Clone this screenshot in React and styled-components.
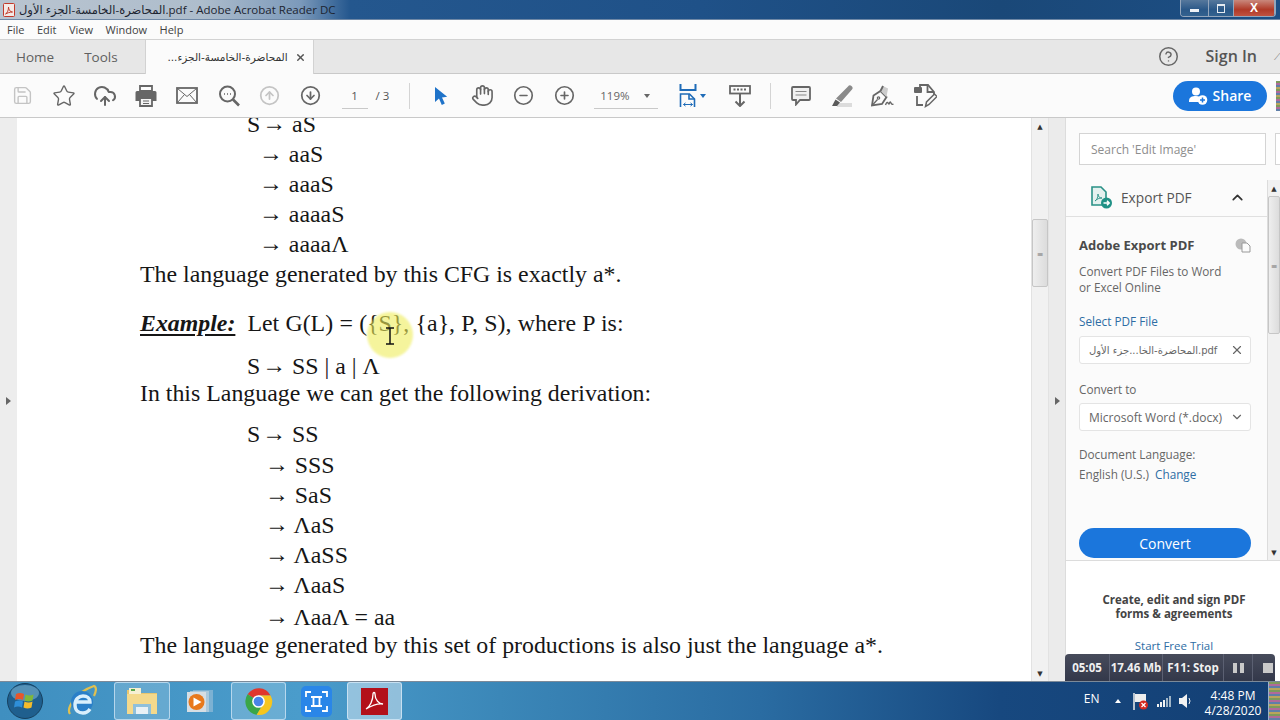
import styled, { createGlobalStyle } from 'styled-components'
import {
  ChevronDown,
  ChevronUp,
  CircleArrowDown,
  CircleArrowUp,
  CircleHelp,
  CircleMinus,
  CirclePlus,
  CloudUpload,
  Hand,
  Save,
  Star,
  X,
} from 'lucide-react'

const GlobalStyle = createGlobalStyle`
  html, body {
    margin: 0;
    padding: 0;
    background: #fff;
  }
  * {
    box-sizing: border-box;
  }
`

const uiFont = '"Open Sans", "DejaVu Sans", sans-serif'
const arabicFont = '"DejaVu Sans", sans-serif'
const glitchStrip = 'repeating-linear-gradient(180deg, #7d9a5c 0 2px, #b06a9a 2px 4px, #5f7fa8 4px 6px, #b9a45c 6px 8px)'

const Screen = styled.div`
  display: flex;
  flex-direction: column;
  font-family: ${uiFont};
  height: 720px;
  overflow: hidden;
  width: 1280px;
`

const TitleBar = styled.div`
  align-items: flex-start;
  background: linear-gradient(90deg, #b9c4d0 0, #aebdcc 200px, #7c9abb 300px, #24578e 350px, #1f5188 700px, #1a4878 1000px, #1d4f85 100%);
  border-bottom: 1px solid #6f88a6;
  display: flex;
  flex: 0 0 20px;
  justify-content: space-between;
`

const TitleText = styled.div`
  align-items: center;
  color: #1c2430;
  display: flex;
  font-size: 11.5px;
  gap: 4px;
  height: 19px;
  padding-left: 3px;
  white-space: nowrap;
`

const WindowButtons = styled.div`
  border: 1px solid #93a6bc;
  border-radius: 0 0 4px 4px;
  border-top: 0;
  display: flex;
  height: 17px;
  margin-right: 4px;
  overflow: hidden;
`

const WindowButton = styled.div`
  align-items: center;
  background: ${({ $close }) => ($close ? 'linear-gradient(#c9887c, #b03a28 60%, #c05240)' : 'linear-gradient(#56789c, #2a5888 60%, #33628f)')};
  border-right: 1px solid #93a6bc;
  color: #fff;
  display: flex;
  font-family: "Liberation Sans", sans-serif;
  font-size: 12px;
  font-weight: 700;
  justify-content: center;
  width: ${({ $w }) => $w}px;
`

const MinimizeGlyph = styled.span`
  background: #eef2f6;
  height: 3px;
  margin-top: 5px;
  width: 9px;
`

const RestoreGlyph = styled.span`
  border: 1px solid #e4eaf0;
  border-top-width: 2px;
  height: 9px;
  width: 8px;
`

const MenuBar = styled.div`
  align-items: center;
  background: #fbfbfb;
  border-bottom: 1px solid #d2d2d2;
  color: #3f3f3f;
  display: flex;
  flex: 0 0 20px;
  font-size: 11px;
  gap: 12.5px;
  padding-left: 7px;
`

const TabRow = styled.div`
  align-items: stretch;
  background: #e7e7e7;
  border-bottom: 1px solid #c9c9c9;
  display: flex;
  flex: 0 0 34px;
  padding-left: 16px;
`

const NavTab = styled.div`
  align-items: center;
  color: #606060;
  display: flex;
  font-size: 13.5px;
  margin-right: 30px;
`

const DocTab = styled.div`
  align-items: center;
  background: #fbfbfb;
  border-left: 1px solid #d2d2d2;
  border-right: 1px solid #d2d2d2;
  color: #333;
  display: flex;
  font-family: ${arabicFont};
  font-size: 10.5px;
  gap: 7px;
  justify-content: flex-end;
  margin-bottom: -1px;
  margin-left: -3px;
  padding-right: 7px;
  width: 169px;
`

const TabSpacer = styled.div`
  flex: 1;
`

const SignIn = styled.div`
  align-items: center;
  color: #555;
  display: flex;
  font-size: 16px;
  font-weight: 600;
  margin-left: 27px;
  margin-right: 17px;
  padding-bottom: 1px;
`

const HelpButton = styled.div`
  align-items: center;
  color: #666;
  display: flex;
`

const EdgeMark = styled.div`
  align-items: center;
  color: #777;
  display: flex;
  font-size: 9px;
  width: 6px;
`

const Toolbar = styled.div`
  align-items: center;
  background: #fbfbfb;
  border-bottom: 1px solid #c9c9c9;
  display: flex;
  flex: 0 0 44px;
  padding-left: 2px;
`

const ToolSlot = styled.div`
  align-items: center;
  color: ${({ $color }) => $color || '#666'};
  display: flex;
  flex: 0 0 41.2px;
  justify-content: center;
`

const PageBox = styled.div`
  border-bottom: 1px solid #c9c9c9;
  color: #555;
  font-size: 11.5px;
  margin-left: 10px;
  padding: 6px 0 5px;
  text-align: center;
  width: 26px;
`

const PageCount = styled.div`
  color: #555;
  font-size: 11.5px;
  margin-left: 8px;
  width: 33px;
`

const ToolDivider = styled.div`
  background: #d4d4d4;
  height: 26px;
  margin: 0 ${({ $right }) => $right}px 0 ${({ $left }) => $left}px;
  width: 1px;
`

const ZoomBox = styled.div`
  align-items: center;
  border-bottom: 1px solid #c9c9c9;
  color: #666;
  display: flex;
  font-size: 11.5px;
  justify-content: space-between;
  margin: 0 13px 0 9px;
  padding: 6px 8px 5px 6px;
  width: 64px;
`

const Caret = styled.span`
  border-left: 3.5px solid transparent;
  border-right: 3.5px solid transparent;
  border-top: 4px solid ${({ $color }) => $color || '#666'};
  height: 0;
  width: 0;
`

const FitSlot = styled.div`
  align-items: center;
  display: flex;
  flex: 0 0 41px;
  gap: 3px;
  justify-content: center;
  margin-right: 7px;
  padding-left: 2px;
`

const ShareButton = styled.div`
  align-items: center;
  background: #1b76dc;
  border-radius: 15px;
  color: #fff;
  display: flex;
  font-size: 14px;
  font-weight: 600;
  gap: 5px;
  height: 30px;
  justify-content: center;
  margin-left: auto;
  margin-right: 9px;
  width: 94px;
`

const ToolbarEdge = styled.div`
  background: ${glitchStrip};
  height: 30px;
  width: 4px;
`

const Workspace = styled.div`
  display: flex;
  flex: 1;
  min-height: 0;
  position: relative;
`

const LeftGutter = styled.div`
  align-items: center;
  background: #ededed;
  display: flex;
  flex: 0 0 17px;
  justify-content: center;
  padding-right: 1px;
  padding-top: 2px;
`

const SideArrow = styled.span`
  border-bottom: 4px solid transparent;
  border-left: 5px solid #666;
  border-top: 4px solid transparent;
  height: 0;
  width: 0;
`

const DocPage = styled.div`
  background: #fff;
  flex: 0 0 1014px;
  overflow: hidden;
  position: relative;
`

const DocText = styled.div`
  color: #161616;
  font-family: "Liberation Serif", "Times New Roman", serif;
  font-size: 23.85px;
  margin-top: -9px;
  padding-left: 123px;
`

const Line = styled.div`
  height: 30px;
  line-height: 30px;
  margin-top: ${({ $gap }) => $gap || 0}px;
  padding-left: ${({ $x }) => $x || 0}px;
  white-space: pre;
  word-spacing: ${({ $spacing }) => $spacing || 0}px;
`

const Arrow = styled.span`
  display: inline-block;
  margin-left: ${({ $lead }) => ($lead ? 2 : -4)}px;
  transform: translateY(-1.5px);
`

const ExampleLabel = styled.span`
  font-weight: 700;
  font-style: italic;
  margin-right: 12px;
  text-decoration: underline;
  text-decoration-thickness: 2px;
  text-underline-offset: 3px;
`

const CursorGlow = styled.div`
  background: rgba(238, 236, 90, 0.6);
  border-radius: 50%;
  filter: blur(1px);
  height: 46px;
  left: 350px;
  position: absolute;
  top: 194px;
  width: 46px;
`

const CursorMark = styled.svg`
  left: 368px;
  position: absolute;
  top: 209px;
`

const DocScroll = styled.div`
  background: #f1f1f1;
  border-left: 1px solid #e2e2e2;
  border-right: 1px solid #e2e2e2;
  display: flex;
  flex: 0 0 18px;
  flex-direction: column;
  align-items: stretch;
`

const ScrollEnd = styled.div`
  align-items: center;
  color: #333;
  display: flex;
  flex: 0 0 16px;
  font-size: 7px;
  justify-content: center;
`

const ScrollThumb = styled.div`
  align-items: center;
  background: linear-gradient(90deg, #eee, #dcdcdc);
  border: 1px solid #c6c6c6;
  border-radius: 2px;
  color: #777;
  display: flex;
  flex: 0 0 ${({ $h }) => $h}px;
  font-size: 8px;
  justify-content: center;
  margin-top: ${({ $top }) => $top}px;
`

const ScrollFill = styled.div`
  flex: 1;
`

const PanelGutter = styled.div`
  align-items: center;
  background: #ebebeb;
  display: flex;
  flex: 0 0 16px;
  justify-content: center;
  padding-top: 2px;
`

const RightPanel = styled.div`
  background: #fbfbfb;
  border-left: 1px solid #dcdcdc;
  display: flex;
  flex: 1;
  flex-direction: column;
  min-width: 0;
`

const SearchRow = styled.div`
  display: flex;
  flex: 0 0 62px;
  gap: 9px;
  padding: 15px 0 0 13px;
`

const SearchBox = styled.div`
  align-items: center;
  background: #fff;
  border: 1px solid #d4d4d4;
  color: #8d8d8d;
  display: flex;
  font-size: 12px;
  height: 32px;
  padding-left: 11px;
  width: 187px;
`

const SearchStub = styled.div`
  background: #fff;
  border-bottom: 1px solid #d4d4d4;
  border-left: 1px solid #d4d4d4;
  border-top: 1px solid #d4d4d4;
  flex: 1;
  height: 32px;
`

const PanelBody = styled.div`
  display: flex;
  flex: 0 0 380px;
`

const PanelColumn = styled.div`
  display: flex;
  flex: 0 0 201px;
  flex-direction: column;
`

const ExportHeader = styled.div`
  align-items: center;
  border-bottom: 1px solid #e0e0e0;
  color: #555;
  display: flex;
  flex: 0 0 37px;
  font-size: 13.7px;
  gap: 8px;
  padding-left: 24px;
  padding-bottom: 2px;
`

const ExportChevron = styled(ChevronUp)`
  color: #333;
  margin-left: 29px;
`

const ExportForm = styled.div`
  display: flex;
  flex: 1;
  flex-direction: column;
  padding: 19px 0 0 13px;
`

const FormTitle = styled.div`
  align-items: center;
  color: #4a4a4a;
  display: flex;
  font-size: 13px;
  font-weight: 700;
  height: 18px;
  justify-content: space-between;
  padding-right: 15px;
  width: 187px;
`

const FormText = styled.div`
  color: #666;
  font-size: 11.75px;
  line-height: ${({ $lh }) => $lh || 16}px;
  margin-top: ${({ $top }) => $top || 0}px;
`

const FormLink = styled.span`
  color: #2e6da4;
  font-size: 11.75px;
  margin-left: ${({ $left }) => $left || 0}px;
`

const FieldBox = styled.div`
  align-items: center;
  background: #fff;
  border: 1px solid #e4e4e4;
  border-radius: 3px;
  color: #666;
  display: flex;
  font-size: ${({ $small }) => ($small ? 10 : 12)}px;
  height: ${({ $h }) => $h}px;
  justify-content: space-between;
  margin-top: ${({ $top }) => $top}px;
  padding: 0 6px 0 9px;
  width: 172px;
`

const ArabicName = styled.span`
  font-family: ${arabicFont};
  white-space: nowrap;
`

const ConvertButton = styled.div`
  align-items: center;
  background: #1b76dc;
  border-radius: 15px;
  color: #fff;
  display: flex;
  font-size: 14px;
  height: 30px;
  justify-content: center;
  margin-top: 44px;
  width: 172px;
`

const PanelScroll = styled.div`
  background: #f1f1f1;
  border-left: 1px solid #dcdcdc;
  display: flex;
  flex: 1;
  flex-direction: column;
`

const PromoBlock = styled.div`
  border-top: 1px solid #dcdcdc;
  background: #fff;
  display: flex;
  flex: 1;
  flex-direction: column;
  align-items: center;
  padding-top: 32px;
  padding-right: 0;
  width: 216px;
`

const PromoText = styled.div`
  color: #444;
  font-size: 11.5px;
  font-weight: 700;
  line-height: 14px;
  text-align: center;
`

const PromoLink = styled.div`
  color: #2e6da4;
  font-size: 11.5px;
  margin-top: 17px;
`

const RecorderBar = styled.div`
  align-items: stretch;
  background: linear-gradient(#474b5b, #33384a);
  border-radius: 4px 4px 0 0;
  bottom: 0;
  color: #f0f0f0;
  display: flex;
  font-size: 11.5px;
  font-weight: 700;
  height: 27px;
  left: 1065px;
  position: absolute;
  width: 210px;
`

const RecorderCell = styled.div`
  align-items: center;
  border-right: 1px solid #5b6072;
  display: flex;
  gap: 3px;
  justify-content: center;
  width: ${({ $w }) => $w}px;
`

const StopCell = styled.div`
  align-items: center;
  display: flex;
  flex: 1;
  justify-content: flex-end;
  padding-right: 2px;
`

const PauseBar = styled.span`
  background: #c9c9c9;
  height: 10px;
  width: 4px;
`

const StopSquare = styled.span`
  background: #c9c9c9;
  height: 10px;
  width: 10px;
`

const Taskbar = styled.div`
  align-items: stretch;
  background: linear-gradient(90deg, #3f8fc0 0, #4a9ccb 300px, #3b87b8 500px, #2a6ca2 760px, #17487f 1000px, #133f74 100%);
  border-top: 1px solid #7c8a99;
  display: flex;
  flex: 0 0 38px;
`

const TaskSlot = styled.div`
  align-items: center;
  background: ${({ $open, $active }) => ($active ? 'rgba(255,255,255,0.42)' : $open ? 'rgba(255,255,255,0.18)' : 'transparent')};
  border: 1px solid ${({ $open, $active }) => ($open || $active ? 'rgba(235,245,255,0.6)' : 'transparent')};
  border-radius: 3px;
  display: flex;
  justify-content: center;
  margin-right: ${({ $gap }) => $gap || 0}px;
  width: ${({ $w }) => $w}px;
`

const TraySection = styled.div`
  align-items: center;
  color: #fff;
  display: flex;
  margin-left: auto;
`

const TrayLabel = styled.div`
  font-size: 12px;
  margin-right: 15px;
  padding-bottom: 5px;
`

const TrayIcons = styled.div`
  align-items: center;
  display: flex;
  gap: 8.5px;
`

const TrayArrow = styled.span`
  border-bottom: 4px solid #fff;
  border-left: 3.5px solid transparent;
  border-right: 3.5px solid transparent;
  height: 0;
  margin-right: 4px;
  width: 0;
`

const Clock = styled.div`
  font-size: 12px;
  line-height: 15px;
  margin-left: 9px;
  padding-top: 3px;
  text-align: center;
  width: 62px;
`

const ShowDesktop = styled.div`
  background: ${glitchStrip};
  border-left: 1px solid #9cb2c8;
  height: 100%;
  margin-left: 4px;
  width: 12px;
`

function PrinterIcon() {
  return (
    <svg width="22" height="22" viewBox="0 0 22 22">
      <path d="M5 1h12v5H5z" fill="none" stroke="#666" strokeWidth="1.800" />
      <path d="M2 6h18a1.500 1.500 0 0 1 1.500 1.500V16H17v-3H5v3H.500V7.500A1.500 1.500 0 0 1 2 6z" fill="#666" />
      <path d="M5 13h12v8H5z" fill="#f4f4f4" stroke="#666" strokeWidth="1.800" />
      <path d="M8 16h6M8 18.500h6" stroke="#666" strokeWidth="1" />
    </svg>
  )
}

function MailIcon() {
  return (
    <svg width="22" height="17" viewBox="0 0 22 17" fill="none" stroke="#666">
      <rect x="1" y="1" width="20" height="15" strokeWidth="1.800" />
      <path d="M1.500 1.500L11 9.500l9.500-8M1.500 15.500l7-8M20.500 15.500l-7-8" strokeWidth="1" />
    </svg>
  )
}

function SearchDotsIcon() {
  return (
    <svg width="22" height="22" viewBox="0 0 22 22" fill="none" stroke="#666" strokeWidth="2">
      <circle cx="9.500" cy="9" r="7.500" />
      <path d="M15 14.500l6 6" strokeWidth="2.600" />
      <path d="M6 9h1M9 9h1M12 9h1" strokeWidth="1.600" />
    </svg>
  )
}

function PointerIcon() {
  return (
    <svg width="14" height="20" viewBox="0 0 14 20">
      <path d="M1 1v15l4-3.500 2.800 6.500 3-1.400L8 11.500l5.200-.7z" fill="#1f73c9" />
    </svg>
  )
}

function FitWidthIcon() {
  return (
    <svg width="18" height="24" viewBox="0 0 18 24" fill="none" stroke="#1f6cb8" strokeWidth="1.600">
      <path d="M1.500 0v6h15V0" strokeWidth="2" />
      <path d="M1.500 23V10h9l5 5v8" />
      <path d="M10 10v5h5.500" />
      <path d="M4.500 20.500h9M4.500 20.500l2-1.600M4.500 20.500l2 1.600M13.500 20.500l-2-1.600M13.500 20.500l-2 1.600" strokeWidth="1" />
    </svg>
  )
}

function KeyboardDropIcon() {
  return (
    <svg width="22" height="22" viewBox="0 0 22 22" fill="none" stroke="#666">
      <rect x="1" y="1" width="20" height="7.500" strokeWidth="1.800" />
      <path d="M4.500 4.500h13" strokeWidth="2" strokeDasharray="2 1.500" />
      <path d="M11 9v11.500M6.500 16.500l4.500 4.500 4.500-4.500" strokeWidth="2" />
    </svg>
  )
}

function CommentIcon() {
  return (
    <svg width="20" height="20" viewBox="0 0 20 20" fill="none" stroke="#666">
      <path d="M2 1h16a1 1 0 0 1 1 1v11a1 1 0 0 1-1 1H9l-4 4.500V14H2a1 1 0 0 1-1-1V2a1 1 0 0 1 1-1z" fill="#f0f0f0" strokeWidth="1.800" />
      <path d="M4.500 5.500h11M4.500 9h11" stroke="#888" strokeWidth="1.200" />
    </svg>
  )
}

function HighlighterIcon() {
  return (
    <svg width="22" height="22" viewBox="0 0 22 22">
      <rect x="6" y="18" width="15" height="4" fill="#dcdcdc" />
      <path d="M17 1.500a2.500 2.500 0 0 1 4 3L10 17l-5-3.500z" fill="#8a8a8a" />
      <path d="M4.500 14.500l4.500 3-3 3.500H1z" fill="#5a5a5a" />
    </svg>
  )
}

function SignPenIcon() {
  return (
    <svg width="24" height="22" viewBox="0 0 24 22" fill="none" stroke="#666" strokeWidth="1.800">
      <path d="M1 20.500l1.500-10L9.500 6l6 6-4.500 7z" />
      <path d="M1 20.500l5.500-6" strokeWidth="1.300" />
      <circle cx="7.500" cy="13" r="1.200" strokeWidth="1.200" />
      <path d="M9.500 6L12 1l5 2.500-1.500 8.500" fill="#ccc" stroke="none" />
      <path d="M9.500 6l2.500-5" />
      <path d="M14.500 20q1.500-4 2.500-2t1.500 0 1.500 0 2.500 1" strokeWidth="1.400" />
    </svg>
  )
}

function EditDocIcon() {
  return (
    <svg width="24" height="24" viewBox="0 0 24 24" fill="none" stroke="#666" strokeWidth="1.800">
      <path d="M7 3V1h8l6 7v3" />
      <rect x="1" y="3" width="8" height="6" fill="#666" stroke="none" rx="1" />
      <path d="M14.500 1v7H21" />
      <path d="M4 12v9h6" />
      <path d="M12.500 22.500l1-4.500 8-8 2.500 2.500-8 8z" strokeWidth="1.500" />
    </svg>
  )
}

function ShareUserIcon() {
  return (
    <svg width="19" height="18" viewBox="0 0 19 18">
      <circle cx="7" cy="4.500" r="4" fill="#fff" />
      <path d="M0 14c0-4 3-5 7-5 3 0 4 1 5 2l-2 4H0z" fill="#fff" />
      <circle cx="13.500" cy="13" r="4.800" fill="#fff" />
      <path d="M13.500 10.500v5M11 13h5" stroke="#1b76dc" strokeWidth="1.500" />
    </svg>
  )
}

function PdfBadgeIcon() {
  return (
    <svg width="12" height="14" viewBox="0 0 12 14">
      <rect x="0.500" y="0.500" width="11" height="13" rx="1" fill="#f4e9e6" stroke="#c23a2b" />
      <path d="M2.500 11c2-1 3-4 3-7 0 3 2 5 4 5-3 0-5 1-7 2z" fill="none" stroke="#c23a2b" strokeWidth="1" />
    </svg>
  )
}

function ExportPdfIcon() {
  return (
    <svg width="23" height="23" viewBox="0 0 23 23" fill="none">
      <path d="M2 1h9l5 5v13H2z" fill="#e4f1ef" stroke="#2a9187" strokeWidth="1.600" />
      <path d="M5 15c2-1 3-4 3-7 0 3 2 4 4 4-3 0-5 1-7 3z" stroke="#2a9187" strokeWidth="0.900" />
      <circle cx="16.500" cy="17" r="5.500" fill="#1f9186" />
      <path d="M13.500 17h5.500M17 14.800l2.200 2.200-2.200 2.200" stroke="#fff" strokeWidth="1.500" />
    </svg>
  )
}

function CloudDocIcon() {
  return (
    <svg width="16" height="15" viewBox="0 0 16 15">
      <circle cx="6" cy="6" r="5.500" fill="#bbb" />
      <path d="M7 5h5l3 3v6H7z" fill="#fbfbfb" stroke="#999" />
    </svg>
  )
}

function StartOrb() {
  return (
    <svg width="36" height="36" viewBox="0 0 36 36">
      <circle cx="18" cy="18" r="17.500" fill="#1f5f8e" stroke="#17405f" />
      <ellipse cx="18" cy="10" rx="14" ry="8" fill="#8cc4e0" opacity="0.500" />
      <path d="M9 11q4-2 8 0l-1 6q-4-2-8 0z" fill="#e8562a" />
      <path d="M18.500 11.500q4 2 8 0l-1 6q-4 2-8 0z" fill="#7fb83a" />
      <path d="M8 18.500q4-2 8 0l-1 6q-4-2-8 0z" fill="#2f8fd8" />
      <path d="M17.500 18.500q4 2 8 0l-1 6q-4 2-8 0z" fill="#f4bb2c" />
    </svg>
  )
}

function IeIcon() {
  return (
    <svg width="32" height="34" viewBox="0 0 32 34" fill="none">
      <path d="M4 30C0 24 10 8 28 2c3 1 2 6 0 10" stroke="#e0c050" strokeWidth="2.200" />
      <circle cx="16" cy="18" r="11" fill="#2a7fc8" />
      <path d="M9 18h15c0-4-3-6-7-6s-8 3-8 9 4 8 8 8c3 0 5-1 7-4" stroke="#d9effc" strokeWidth="3.400" />
    </svg>
  )
}

function FolderIcon() {
  return (
    <svg width="32" height="28" viewBox="0 0 32 28">
      <path d="M1 3h12l2 3h16v21H1z" fill="#e9c66e" />
      <rect x="3" y="1" width="12" height="6" fill="#f6efd2" />
      <rect x="5" y="2" width="4" height="2" fill="#58a848" />
      <rect x="1" y="7" width="30" height="20" fill="#f4d98c" />
      <rect x="7" y="17" width="18" height="10" fill="#8fc0dc" />
      <rect x="10" y="20" width="12" height="7" fill="#e8f1f6" />
    </svg>
  )
}

function MediaIcon() {
  return (
    <svg width="26" height="24" viewBox="0 0 26 24">
      <rect x="6" y="1" width="20" height="22" fill="#9fc2da" opacity="0.600" />
      <rect x="3" y="2" width="19" height="21" fill="#b6cfe0" opacity="0.800" />
      <rect x="0" y="3" width="19" height="20" fill="#d6dee4" />
      <circle cx="9.500" cy="13" r="8" fill="#e8791d" />
      <path d="M6.500 8.500v9l8-4.500z" fill="#fff" />
    </svg>
  )
}

function ChromeIcon() {
  return (
    <svg width="29" height="29" viewBox="0 0 48 48">
      <path d="M24 24L6 12a22 22 0 0 1 38 2H24z" fill="#e0372c" />
      <path d="M24 24l-18-12a22 22 0 0 0 15 34l11-18z" fill="#3aa648" />
      <path d="M24 14h20a22 22 0 0 1-23 32l12-20z" fill="#f7c51d" />
      <circle cx="24" cy="24" r="10.500" fill="#fff" />
      <circle cx="24" cy="24" r="8" fill="#4a84e8" />
    </svg>
  )
}

function CaptureIcon() {
  return (
    <svg width="31" height="31" viewBox="0 0 31 31" fill="none">
      <rect width="31" height="31" rx="5" fill="#2a86e8" />
      <path d="M5 11V6h5M21 6h5v5M5 20v5h5M21 25h5v-5" stroke="#fff" strokeWidth="1.800" />
      <path d="M10 11h11M10 20h11M12.500 11v9M18.500 11v9" stroke="#fff" strokeWidth="1.800" />
    </svg>
  )
}

function AcrobatIcon() {
  return (
    <svg width="27" height="27" viewBox="0 0 27 27" fill="none">
      <rect width="27" height="27" fill="#b3101a" />
      <path d="M5 21c4-2 7-9 7-15 0-2 2-2 2 0 0 6 4 10 8 10-6-1-12 2-17 5z" stroke="#fff" strokeWidth="1.300" />
    </svg>
  )
}

function TrayFlagIcon() {
  return (
    <svg width="15" height="17" viewBox="0 0 15 17">
      <path d="M1 0v17" stroke="#eee" strokeWidth="1.500" />
      <path d="M2 1h11v8H2z" fill="#eee" />
      <circle cx="10.500" cy="12" r="4.500" fill="#d42a20" />
      <path d="M8.500 10l4 4M12.500 10l-4 4" stroke="#fff" strokeWidth="1.200" />
    </svg>
  )
}

function TraySignalIcon() {
  return (
    <svg width="14" height="11" viewBox="0 0 14 11" fill="#f2f2f2">
      <rect x="0" y="8" width="2" height="3" />
      <rect x="3" y="6" width="2" height="5" />
      <rect x="6" y="4" width="2" height="7" />
      <rect x="9" y="2" width="2" height="9" fill="#9fb4c6" />
      <rect x="12" y="0" width="2" height="11" fill="#9fb4c6" />
    </svg>
  )
}

function TraySpeakerIcon() {
  return (
    <svg width="14" height="14" viewBox="0 0 14 14">
      <path d="M0 4h3l5-4v14l-5-4H0z" fill="#f2f2f2" />
      <path d="M10 4q2 3 0 6" stroke="#f2f2f2" fill="none" />
    </svg>
  )
}

const topLines = ['aaS', 'aaaS', 'aaaaS', 'aaaaΛ']
const deriveLines = [
  ['SSS', 1],
  ['SaS', 0],
  ['ΛaS', 0],
  ['ΛaSS', 0],
  ['ΛaaS', 0],
  ['ΛaaΛ = aa', 2],
]

export default function App() {
  return (
    <Screen>
      <GlobalStyle />
      <TitleBar>
        <TitleText>
          <PdfBadgeIcon />
          <span>المحاضرة-الخامسة-الجزء الأول.pdf - Adobe Acrobat Reader DC</span>
        </TitleText>
        <WindowButtons>
          <WindowButton $w={28}>
            <MinimizeGlyph />
          </WindowButton>
          <WindowButton $w={25}>
            <RestoreGlyph />
          </WindowButton>
          <WindowButton $w={41} $close>
            X
          </WindowButton>
        </WindowButtons>
      </TitleBar>

      <MenuBar>
        <span>File</span>
        <span>Edit</span>
        <span>View</span>
        <span>Window</span>
        <span>Help</span>
      </MenuBar>

      <TabRow>
        <NavTab>Home</NavTab>
        <NavTab>Tools</NavTab>
        <DocTab>
          <span dir="rtl">المحاضرة-الخامسة-الجزء...</span>
          <X size={11} strokeWidth={3} color="#555" />
        </DocTab>
        <TabSpacer />
        <HelpButton>
          <CircleHelp size={21} strokeWidth={1.7} />
        </HelpButton>
        <SignIn>Sign In</SignIn>
        <EdgeMark>⟋</EdgeMark>
      </TabRow>

      <Toolbar>
        <ToolSlot $color="#c4c4c4"><Save size={21} strokeWidth={1.6} /></ToolSlot>
        <ToolSlot><Star size={24} strokeWidth={1.4} /></ToolSlot>
        <ToolSlot><CloudUpload size={24} strokeWidth={2} /></ToolSlot>
        <ToolSlot><PrinterIcon /></ToolSlot>
        <ToolSlot><MailIcon /></ToolSlot>
        <ToolSlot><SearchDotsIcon /></ToolSlot>
        <ToolSlot $color="#c4c4c4"><CircleArrowUp size={21} strokeWidth={2} /></ToolSlot>
        <ToolSlot><CircleArrowDown size={21} strokeWidth={2} /></ToolSlot>
        <PageBox>1</PageBox>
        <PageCount>/ 3</PageCount>
        <ToolDivider $left={0} $right={11} />
        <ToolSlot><PointerIcon /></ToolSlot>
        <ToolSlot><Hand size={23} strokeWidth={1.7} /></ToolSlot>
        <ToolSlot><CircleMinus size={21} strokeWidth={1.9} /></ToolSlot>
        <ToolSlot><CirclePlus size={21} strokeWidth={1.9} /></ToolSlot>
        <ZoomBox>
          <span>119%</span>
          <Caret />
        </ZoomBox>
        <FitSlot>
          <FitWidthIcon />
          <Caret $color="#1f6cb8" />
        </FitSlot>
        <ToolSlot><KeyboardDropIcon /></ToolSlot>
        <ToolDivider $left={10} $right={9} />
        <ToolSlot><CommentIcon /></ToolSlot>
        <ToolSlot><HighlighterIcon /></ToolSlot>
        <ToolSlot><SignPenIcon /></ToolSlot>
        <ToolSlot><EditDocIcon /></ToolSlot>
        <ShareButton>
          <ShareUserIcon />
          Share
        </ShareButton>
        <ToolbarEdge />
      </Toolbar>

      <Workspace>
        <LeftGutter>
          <SideArrow />
        </LeftGutter>
        <DocPage>
          <DocText>
            <Line $x={107}>S<Arrow $lead>→</Arrow> aS</Line>
            {topLines.map((text) => (
              <Line key={text} $x={123}><Arrow>→</Arrow> {text}</Line>
            ))}
            <Line>The language generated by this CFG is exactly a*.</Line>
            <Line $gap={19} $spacing={0.35}>
              <ExampleLabel>Example:</ExampleLabel>
              Let G(L) = ({'{'}S{'}'}, {'{'}a{'}'}, P, S), where P is:
            </Line>
            <Line $gap={13} $x={107}>S<Arrow $lead>→</Arrow> SS | a | Λ</Line>
            <Line $gap={-3}>In this Language we can get the following derivation:</Line>
            <Line $gap={11} $x={107}>S<Arrow $lead>→</Arrow> SS</Line>
            {deriveLines.map(([text, gap]) => (
              <Line key={text} $gap={gap} $x={129}><Arrow>→</Arrow> {text}</Line>
            ))}
            <Line $gap={-2}>The language generated by this set of productions is also just the language a*.</Line>
          </DocText>
          <CursorGlow />
          <CursorMark width="10" height="18" viewBox="0 0 10 18" fill="none" stroke="#111" strokeWidth="1.500">
            <path d="M1 1h8M1 17h8M5 1v16" />
          </CursorMark>
        </DocPage>
        <DocScroll>
          <ScrollEnd>▲</ScrollEnd>
          <ScrollThumb $top={85} $h={68}>≡</ScrollThumb>
          <ScrollFill />
          <ScrollEnd>▼</ScrollEnd>
        </DocScroll>
        <PanelGutter>
          <SideArrow />
        </PanelGutter>
        <RightPanel>
          <SearchRow>
            <SearchBox>Search 'Edit Image'</SearchBox>
            <SearchStub />
          </SearchRow>
          <PanelBody>
            <PanelColumn>
              <ExportHeader>
                <ExportPdfIcon />
                Export PDF
                <ExportChevron size={17} strokeWidth={2.4} />
              </ExportHeader>
              <ExportForm>
                <FormTitle>
                  Adobe Export PDF
                  <CloudDocIcon />
                </FormTitle>
                <FormText $top={9}>Convert PDF Files to Word<br />or Excel Online</FormText>
                <FormText $top={18}><FormLink>Select PDF File</FormLink></FormText>
                <FieldBox $h={28} $top={7} $small>
                  <ArabicName>المحاضرة-الخا...جزء الأول.pdf</ArabicName>
                  <X size={14} color="#666" />
                </FieldBox>
                <FormText $top={17}>Convert to</FormText>
                <FieldBox $h={28} $top={6}>
                  Microsoft Word (*.docx)
                  <ChevronDown size={14} color="#666" />
                </FieldBox>
                <FormText $top={13} $lh={20}>
                  Document Language:<br />
                  English (U.S.)<FormLink $left={6}>Change</FormLink>
                </FormText>
                <ConvertButton>Convert</ConvertButton>
              </ExportForm>
            </PanelColumn>
            <PanelScroll>
              <ScrollEnd>▲</ScrollEnd>
              <ScrollThumb $top={0} $h={138}>≡</ScrollThumb>
              <ScrollFill />
              <ScrollEnd>▼</ScrollEnd>
            </PanelScroll>
          </PanelBody>
          <PromoBlock>
            <PromoText>Create, edit and sign PDF<br />forms &amp; agreements</PromoText>
            <PromoLink>Start Free Trial</PromoLink>
          </PromoBlock>
        </RightPanel>
        <RecorderBar>
          <RecorderCell $w={45}>05:05</RecorderCell>
          <RecorderCell $w={53}>17.46 Mb</RecorderCell>
          <RecorderCell $w={61}>F11: Stop</RecorderCell>
          <RecorderCell $w={29}><PauseBar /><PauseBar /></RecorderCell>
          <StopCell><StopSquare /></StopCell>
        </RecorderBar>
      </Workspace>

      <Taskbar>
        <TaskSlot $w={50}><StartOrb /></TaskSlot>
        <TaskSlot $w={64}><IeIcon /></TaskSlot>
        <TaskSlot $w={56} $open><FolderIcon /></TaskSlot>
        <TaskSlot $w={60} $gap={1}><MediaIcon /></TaskSlot>
        <TaskSlot $w={55} $open><ChromeIcon /></TaskSlot>
        <TaskSlot $w={61}><CaptureIcon /></TaskSlot>
        <TaskSlot $w={55} $active><AcrobatIcon /></TaskSlot>
        <TraySection>
          <TrayLabel>EN</TrayLabel>
          <TrayIcons>
            <TrayArrow />
            <TrayFlagIcon />
            <TraySignalIcon />
            <TraySpeakerIcon />
          </TrayIcons>
          <Clock>4:48 PM<br />4/28/2020</Clock>
          <ShowDesktop />
        </TraySection>
      </Taskbar>
    </Screen>
  )
}
